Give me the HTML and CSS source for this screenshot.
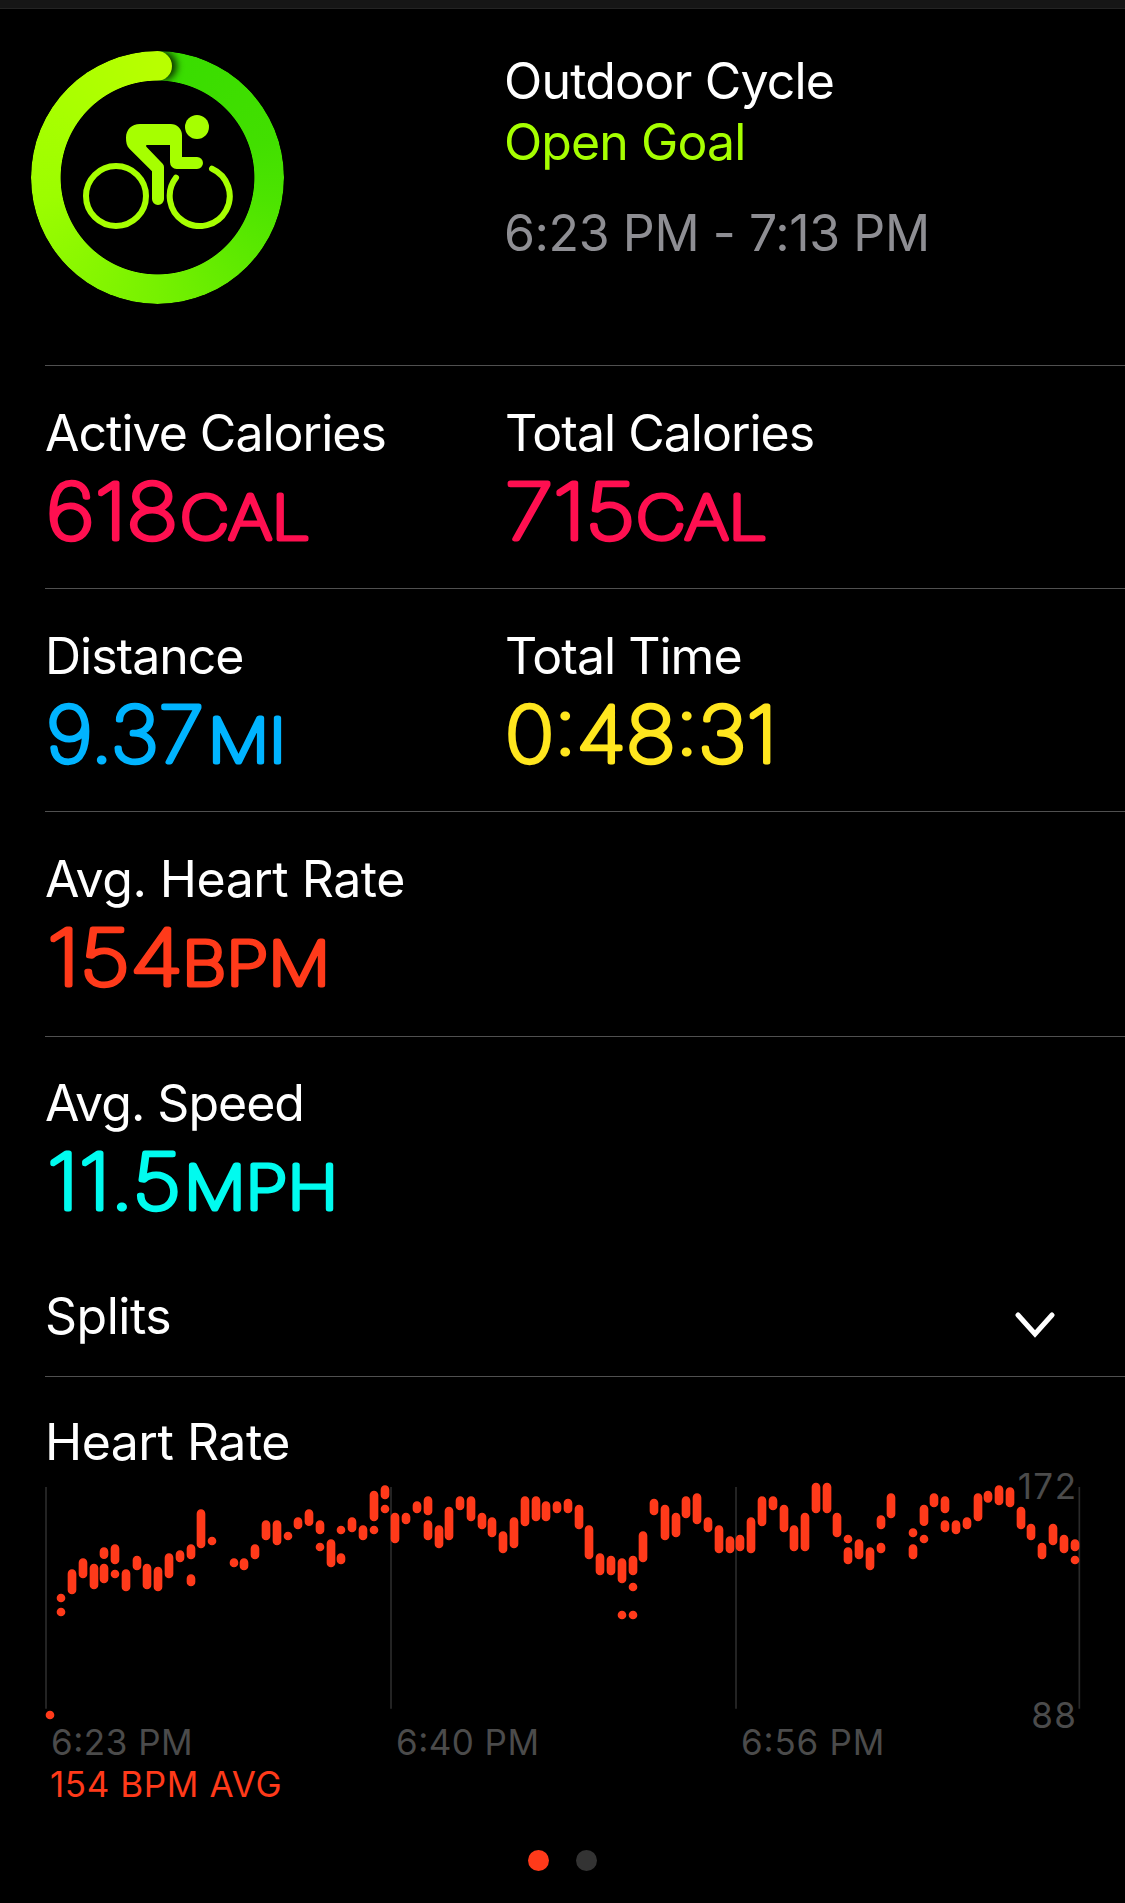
FILE: index.html
```html
<!DOCTYPE html>
<html lang="en">
<head>
    <meta charset="UTF-8">
    <meta name="viewport" content="width=device-width, initial-scale=1.0">
    <title>Outdoor Cycle</title>
    <link rel="stylesheet" href="styles.css">
</head>
<body>
    <div class="top-bar"></div>

    <!-- Workout summary -->
    <header class="summary">
        <div class="goal">
            <div class="ring"></div>
            <svg class="bike" viewBox="0 0 450 342">
                <circle class="wheel" cx="99" cy="243" r="90"/>
                <path class="wheel" d="M387 161 A90 90 0 1 1 279 188"/>
                <circle cx="342" cy="36" r="36"/>
                <path d="M171 27 H263 A34 34 0 0 1 297 61 V126 H342 A18 18 0 0 1 342 162 H281 A20 20 0 0 1 261 142 V90 H192 Q187 91 190 95 L239 146 Q243 150 243 156 V252 A18 18 0 0 1 207 252 V169 L140 102 C131 93 129 82 129 68 C129 44 146 27 171 27 Z"/>
            </svg>
        </div>
        <div class="summary-text">
            <h1>Outdoor Cycle</h1>
            <p class="goal-name">Open Goal</p>
            <p class="time-range">6:23 PM - 7:13 PM</p>
        </div>
    </header>

    <!-- Stats -->
    <section class="stats">
        <div class="row">
            <div class="stat">
                <h2>Active Calories</h2>
                <svg class="value calories">
                    <text x="0" y="75.5" textLength="132" lengthAdjust="spacingAndGlyphs">618</text>
                    <text class="unit" x="134" y="75.5" textLength="130" lengthAdjust="spacingAndGlyphs">CAL</text>
                </svg>
            </div>
            <div class="stat">
                <h2>Total Calories</h2>
                <svg class="value calories">
                    <text x="-1" y="75.5" textLength="130" lengthAdjust="spacingAndGlyphs">715</text>
                    <text class="unit" x="130" y="75.5" textLength="131" lengthAdjust="spacingAndGlyphs">CAL</text>
                </svg>
            </div>
        </div>
        <div class="row">
            <div class="stat">
                <h2>Distance</h2>
                <svg class="value distance">
                    <text x="0" y="75.5" textLength="158" lengthAdjust="spacingAndGlyphs">9.37</text>
                    <text class="unit" x="162" y="75.5" textLength="78" lengthAdjust="spacingAndGlyphs">MI</text>
                </svg>
            </div>
            <div class="stat">
                <h2>Total Time</h2>
                <svg class="value time">
                    <text x="-1" y="75.5" textLength="272" lengthAdjust="spacingAndGlyphs">0:48:31</text>
                </svg>
            </div>
        </div>
        <div class="row">
            <div class="stat">
                <h2 class="wide">Avg. Heart Rate</h2>
                <svg class="value heart">
                    <text x="1" y="75.5" textLength="136" lengthAdjust="spacingAndGlyphs">154</text>
                    <text class="unit" x="136" y="75.5" textLength="148" lengthAdjust="spacingAndGlyphs">BPM</text>
                </svg>
            </div>
        </div>
        <div class="row">
            <div class="stat">
                <h2>Avg. Speed</h2>
                <svg class="value speed">
                    <text x="1" y="75.5" textLength="134" lengthAdjust="spacingAndGlyphs">11.5</text>
                    <text class="unit" x="138" y="75.5" textLength="154" lengthAdjust="spacingAndGlyphs">MPH</text>
                </svg>
            </div>
        </div>
    </section>

    <section class="splits">
        <h2 class="wide">Splits</h2>
        <svg class="chevron" viewBox="0 0 40 26">
            <path d="M3 3 L20 22 L37 3"/>
        </svg>
    </section>

    <!-- Heart rate chart -->
    <section class="heart-rate">
        <h2 class="wide">Heart Rate</h2>
        <svg class="chart" viewBox="0 0 3210 900">
            <g class="grid">
                <path d="M48 51 V716 M1083 51 V716 M2118 51 V716 M3148 51 V716"/>
            </g>
            <path class="bars" id="bars"/>
            <g class="axis">
                <text x="63" y="856" textLength="425">6:23 PM</text>
                <text x="1098" y="856" textLength="429">6:40 PM</text>
                <text x="2133" y="856" textLength="430">6:56 PM</text>
                <text x="2963" y="87" textLength="175">172</text>
                <text x="3004" y="773" textLength="134">88</text>
            </g>
        </svg>
        <p class="average">154 BPM AVG</p>
    </section>

    <div class="pager">
        <span class="dot active"></span>
        <span class="dot"></span>
    </div>

    <script>
        // x position, then top/bottom of each bar in that column
        const samples = [
            [60, 722, 748], [93, 371, 397, 413, 439], [126, 298, 373], [159, 265, 325], [192, 281, 358],
            [222, 232, 267, 281, 340], [255, 223, 283, 299, 325], [288, 298, 364], [321, 257, 301], [351, 281, 358],
            [384, 290, 364], [417, 250, 325], [450, 241, 277], [483, 223, 268, 313, 349], [513, 118, 235],
            [546, 200, 226], [612, 265, 292], [642, 265, 301], [675, 223, 268], [708, 151, 211],
            [741, 151, 226], [774, 185, 211], [804, 142, 178], [837, 118, 168], [870, 151, 193, 218, 244],
            [903, 208, 292], [933, 167, 193, 250, 283], [966, 142, 187], [999, 166, 211], [1032, 62, 154, 167, 193],
            [1065, 46, 88, 104, 130], [1095, 128, 220], [1128, 128, 163], [1161, 94, 130], [1194, 79, 136, 151, 211],
            [1227, 166, 235], [1257, 110, 211], [1290, 79, 121], [1323, 79, 154], [1356, 128, 178],
            [1386, 142, 202], [1419, 184, 250], [1452, 142, 235], [1485, 79, 169], [1518, 79, 154],
            [1548, 94, 154], [1581, 94, 130], [1614, 86, 130], [1647, 104, 178], [1677, 166, 268],
            [1710, 250, 316], [1743, 257, 316], [1776, 265, 340, 422, 448], [1809, 257, 316, 338, 364, 422, 448], [1839, 184, 277],
            [1872, 86, 136], [1905, 104, 211], [1938, 128, 202], [1968, 79, 145], [2001, 70, 163],
            [2034, 142, 187], [2067, 166, 250], [2100, 199, 250], [2130, 194, 244], [2163, 142, 250],
            [2196, 79, 169], [2229, 79, 121], [2262, 104, 187], [2292, 166, 244], [2325, 128, 244],
            [2358, 38, 130], [2391, 38, 130], [2421, 128, 202], [2454, 194, 220, 232, 283], [2487, 208, 268],
            [2520, 232, 301], [2553, 136, 178, 218, 250], [2583, 70, 145], [2649, 175, 202, 223, 268], [2682, 104, 168, 194, 220],
            [2712, 70, 112], [2745, 79, 130, 151, 187], [2778, 151, 193], [2811, 142, 178], [2844, 70, 154],
            [2874, 62, 98], [2907, 46, 106], [2940, 52, 112], [2973, 110, 178], [3003, 161, 211],
            [3036, 218, 268], [3069, 161, 226], [3102, 194, 250], [3135, 208, 244, 257, 283]
        ];
        const cap = 13;
        let d = "";

        samples.forEach(([x, ...ends]) => {
            for (let i = 0; i < ends.length; i += 2) {
                d += `M${x} ${ends[i] + cap}V${ends[i + 1] - cap}`;
            }
        });

        document.getElementById("bars").setAttribute("d", d);
    </script>
</body>
</html>
```
FILE: styles.css
```css
body {
    margin: 0;
    height: 1903px;
    overflow: hidden;
    background: #000000;
    color: #ffffff;
    font-family: Inter, 'Liberation Sans', sans-serif;
    font-size: 50px;
    line-height: 60px;
}

h1, h2, p {
    margin: 0;
    font-size: inherit;
    font-weight: 400;
    letter-spacing: -0.9px;
    white-space: nowrap;
}

h1 {
    letter-spacing: -0.8px;
}

h2 {
    letter-spacing: -1px;
}

h2.wide {
    letter-spacing: -0.5px;
}

.top-bar {
    height: 8px;
    background: #161616;
    border-bottom: 1px solid #242424;
}

.summary {
    display: grid;
    grid-template-columns: 473px 1fr;
    height: 356px;
    box-sizing: border-box;
    padding: 42px 0 0 31px;
}

.goal {
    display: grid;
    width: 253px;
    height: 253px;
    place-items: center;
}

.goal > * {
    grid-area: 1 / 1;
}

.ring {
    position: relative;
    width: 253px;
    height: 253px;
    border-radius: 50%;
    background: conic-gradient(#38dc00, #42df00 20%, #4ce400 28%, #76f100 50%, #9cfd00 72%, #a8ff00 85%, #b8ff00);
    -webkit-mask: radial-gradient(circle, transparent 96.5px, #000 97.3px);
    mask: radial-gradient(circle, transparent 96.5px, #000 97.3px);
}

/* rounded end of the ring */
.ring::after {
    content: "";
    position: absolute;
    top: 0;
    left: 111px;
    width: 30px;
    height: 30px;
    border-radius: 50%;
    background: #b8ff00;
    box-shadow: 5px 0 7px rgba(0, 0, 0, 0.75);
    clip-path: inset(-10px -30px -10px 15px);
}

.bike {
    width: 150px;
    height: 114px;
    margin-top: -11px;
    fill: #a6ff00;
}

.bike .wheel {
    fill: none;
    stroke: #a6ff00;
    stroke-width: 18;
    stroke-linecap: round;
}

.goal-name {
    margin-top: 1px;
    color: #a6ff00;
}

.time-range {
    margin-top: 31px;
    letter-spacing: -0.4px;
    color: #8e8e93;
}

.row {
    display: grid;
    grid-template-columns: 460px 1fr;
    height: 223px;
    box-sizing: border-box;
    margin-left: 45px;
    padding-top: 37px;
    border-top: 1px solid #505050;
}

.row:nth-child(3) {
    height: 225px;
}

.row:nth-child(4) {
    padding-top: 36px;
}

/* thin digits with a round outline give the rounded numerals */
.value {
    display: block;
    overflow: visible;
    width: 400px;
    height: 96px;
    margin-left: 1px;
    fill: currentColor;
    stroke: currentColor;
    stroke-width: 5;
    stroke-linejoin: round;
    font-size: 76.5px;
    font-weight: 100;
}

.unit {
    font-size: 59.5px;
}

.calories {
    color: #ff0f50;
}

.distance {
    color: #00b4ff;
}

.time {
    color: #ffe61e;
}

.heart {
    color: #ff3a1a;
}

.speed {
    color: #00fbef;
}

.splits {
    display: flex;
    justify-content: space-between;
    align-items: center;
    height: 118px;
    box-sizing: border-box;
    margin-left: 45px;
    padding: 0 70px 3px 0;
    border-bottom: 1px solid #505050;
}

.chevron {
    width: 40px;
    height: 26px;
    margin-top: 18px;
    fill: none;
    stroke: #ffffff;
    stroke-width: 5;
    stroke-linecap: round;
}

.heart-rate {
    padding-top: 35px;
}

.heart-rate h2 {
    height: 58px;
    margin-left: 45px;
}

.chart {
    display: block;
    overflow: visible;
    width: 1070px;
    height: 300px;
    margin-left: 30px;
}

.grid path {
    stroke: #2a2a2a;
    stroke-width: 5;
}

.bars {
    stroke: #ff3a1a;
    stroke-width: 26;
    stroke-linecap: round;
}

.axis {
    fill: #4b4b4b;
    font-size: 105px;
}

.average {
    margin: -6px 0 0 50px;
    font-size: 35px;
    line-height: 40px;
    letter-spacing: 0.6px;
    color: #ff3a1a;
}

.pager {
    display: flex;
    justify-content: center;
    gap: 27px;
    margin-top: 46px;
}

.dot {
    width: 21px;
    height: 21px;
    border-radius: 50%;
    background: #333333;
}

.dot.active {
    background: #ff3a1a;
}
```
